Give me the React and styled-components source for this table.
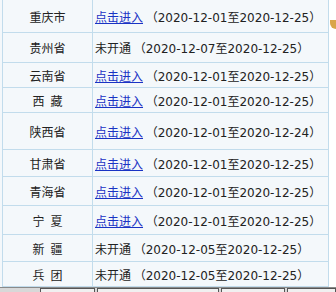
import React from "react";
import styled, { createGlobalStyle } from "styled-components";

const rows = [
  { name: "重庆市", open: true, start: "2020-12-01", end: "2020-12-25", h: 33 },
  { name: "贵州省", open: false, start: "2020-12-07", end: "2020-12-25", h: 30 },
  { name: "云南省", open: true, start: "2020-12-01", end: "2020-12-25", h: 25 },
  { name: "西\u2002藏", open: true, start: "2020-12-01", end: "2020-12-25", h: 25 },
  { name: "陕西省", open: true, start: "2020-12-01", end: "2020-12-24", h: 37 },
  { name: "甘肃省", open: true, start: "2020-12-01", end: "2020-12-25", h: 27 },
  { name: "青海省", open: true, start: "2020-12-01", end: "2020-12-25", h: 29 },
  { name: "宁\u2002夏", open: true, start: "2020-12-01", end: "2020-12-25", h: 29 },
  { name: "新\u2002疆", open: false, start: "2020-12-05", end: "2020-12-25", h: 27 },
  { name: "兵\u2002团", open: false, start: "2020-12-05", end: "2020-12-25", h: 25 },
];

const App = () => {
  return (
    <Page>
      <GlobalStyle />
      <MainRow>
        <Table>
          <tbody>
            {rows.map((r) => (
              <Row key={r.name} $h={r.h}>
                <NameCell>{r.name}</NameCell>
                <InfoCell>
                  {r.open ? <EnterLink href="#">点击进入</EnterLink> : <span>未开通</span>}
                  <Dates>
                    {" （"}
                    <Num>{r.start}</Num>至<Num>{r.end}</Num>）
                  </Dates>
                </InfoCell>
              </Row>
            ))}
          </tbody>
        </Table>
        <Side>
          <Badge />
        </Side>
      </MainRow>

      {/* bottom toolbar strip */}
      <Toolbar>
        <ToolTab $w={55} />
        <ToolTab $w={123} />
        <ToolTab $w={64} />
        <ToolTab $w={48} />
      </Toolbar>
    </Page>
  );
};

const GlobalStyle = createGlobalStyle`
  body {
    margin: 0;
    background: #ffffff;
    font-family: "Noto Sans CJK SC", "DejaVu Sans", sans-serif;
  }
`;

const Page = styled.div`
  width: 336px;
  height: 292px;
  overflow: hidden;
  background: #f4f8fb;
`;

const MainRow = styled.div`
  display: flex;
  padding-left: 2px;
`;

const Table = styled.table`
  border-collapse: collapse;
  width: 330px;
  table-layout: fixed;
  background: #f4f8fb;
  margin-top: -1px;
`;

const Row = styled.tr`
  height: ${(p) => p.$h}px;
`;

const cell = `
  border: 1px solid #c2dcec;
  padding: 0;
  font-size: 12px;
  color: #222;
  vertical-align: middle;
  white-space: nowrap;
`;

const NameCell = styled.td`
  ${cell}
  width: 89px;
  text-align: center;
`;

const InfoCell = styled.td`
  ${cell}
  padding-left: 2px;
  text-align: left;
`;

const EnterLink = styled.a`
  color: #1a33c4;
  text-decoration: underline;
`;

const Dates = styled.span`
  color: #222;
`;

const Num = styled.span`
  font-family: "DejaVu Sans", sans-serif;
  font-size: 12px;
`;

const Side = styled.div`
  flex: 1;
  padding-top: 20px;
  background: #ffffff;
`;

const Badge = styled.div`
  width: 6px;
  height: 9px;
  border-radius: 0 0 0 6px;
  background: #d9a54a;
  margin-left: 1px;
`;

const Toolbar = styled.div`
  display: flex;
  align-items: flex-end;
  gap: 2px;
  height: 5px;
  padding-left: 40px;
  background: #d8d8d8;
  border-top: 1px solid #8a8a8a;
`;

const ToolTab = styled.div`
  width: ${(p) => p.$w}px;
  height: 4px;
  background: #f0f0f0;
  border: 1px solid #555;
  border-bottom: none;
`;

export default App;
